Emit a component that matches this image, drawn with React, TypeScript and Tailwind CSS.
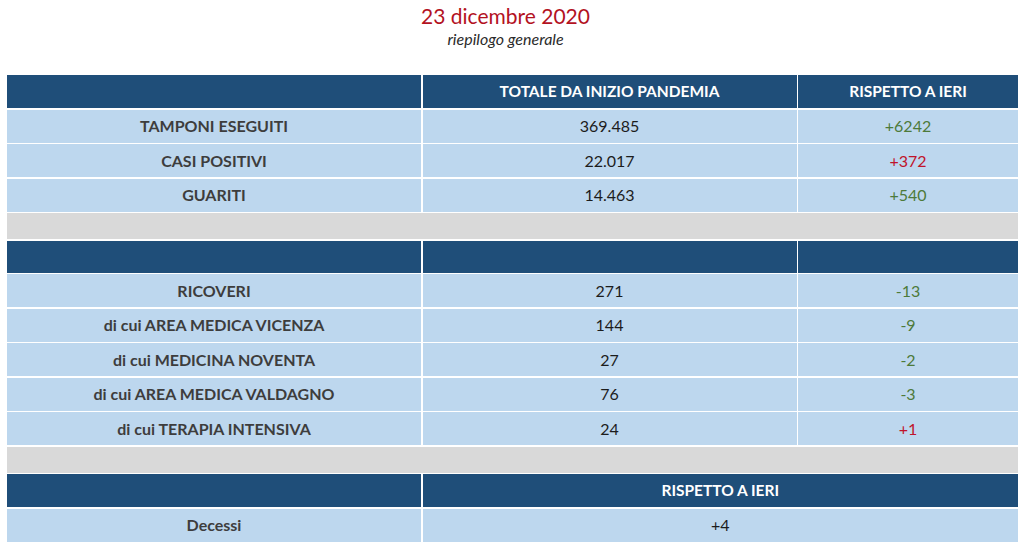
const font = { fontFamily: "Lato, 'Open Sans', sans-serif" };

type Row = { label: string; total: string; delta: string; tone: "up" | "down" };

const primary: Row[] = [
  { label: "TAMPONI ESEGUITI", total: "369.485", delta: "+6242", tone: "down" },
  { label: "CASI POSITIVI", total: "22.017", delta: "+372", tone: "up" },
  { label: "GUARITI", total: "14.463", delta: "+540", tone: "down" },
];

const hospital: Row[] = [
  { label: "RICOVERI", total: "271", delta: "-13", tone: "down" },
  { label: "di cui AREA MEDICA VICENZA", total: "144", delta: "-9", tone: "down" },
  { label: "di cui MEDICINA NOVENTA", total: "27", delta: "-2", tone: "down" },
  { label: "di cui AREA MEDICA VALDAGNO", total: "76", delta: "-3", tone: "down" },
  { label: "di cui TERAPIA INTENSIVA", total: "24", delta: "+1", tone: "up" },
];

function DataRow({ row }: { row: Row }) {
  return (
    <>
      <div className="flex h-[33px] items-center justify-center bg-[#bdd7ee] text-[16px] font-bold text-[#3d3d3d]">
        {row.label}
      </div>
      <div className="flex h-[33px] items-center justify-center bg-[#bdd7ee] text-[16px] text-[#1c1c1c]">
        {row.total}
      </div>
      <div
        className={
          row.tone === "up"
            ? "flex h-[33px] items-center justify-center bg-[#bdd7ee] text-[16px] text-[#c0142b]"
            : "flex h-[33px] items-center justify-center bg-[#bdd7ee] text-[16px] text-[#4d7a3a]"
        }
      >
        {row.delta}
      </div>
    </>
  );
}

function Spacer() {
  return <div className="col-span-3 h-[26px] bg-[#d9d9d9]" />;
}

export default function App() {
  return (
    <div className="h-[549px] w-[1024px] overflow-hidden bg-white" style={font}>
      <div className="flex flex-col items-center pr-[13px] pt-[2px]">
        <h1 className="text-[21px] leading-[27px] text-[#b3121f]">23 dicembre 2020</h1>
        <p className="mt-[1px] text-[16px] italic leading-[18px] text-[#2b2b2b]">riepilogo generale</p>
      </div>

      <div className="ml-[7px] mt-[27px] grid w-[1011px] grid-cols-[414px_374px_1fr] gap-[1.5px]">
        <div className="h-[33px] bg-[#1f4e79]" />
        <div className="flex h-[33px] items-center justify-center bg-[#1f4e79] text-[15.5px] font-bold text-white">
          TOTALE DA INIZIO PANDEMIA
        </div>
        <div className="flex h-[33px] items-center justify-center bg-[#1f4e79] text-[15.5px] font-bold text-white">
          RISPETTO A IERI
        </div>
        {primary.map((row) => (
          <DataRow key={row.label} row={row} />
        ))}

        <Spacer />

        <div className="h-[32px] bg-[#1f4e79]" />
        <div className="h-[32px] bg-[#1f4e79]" />
        <div className="h-[32px] bg-[#1f4e79]" />
        {hospital.map((row) => (
          <DataRow key={row.label} row={row} />
        ))}

        <Spacer />

        <div className="h-[33px] bg-[#1f4e79]" />
        <div className="col-span-2 flex h-[33px] items-center justify-center bg-[#1f4e79] text-[15.5px] font-bold text-white">
          RISPETTO A IERI
        </div>
        <div className="flex h-[33px] items-center justify-center bg-[#bdd7ee] text-[16px] font-bold text-[#3d3d3d]">
          Decessi
        </div>
        <div className="col-span-2 flex h-[33px] items-center justify-center bg-[#bdd7ee] text-[16px] text-[#1c1c1c]">
          +4
        </div>
      </div>
    </div>
  );
}
